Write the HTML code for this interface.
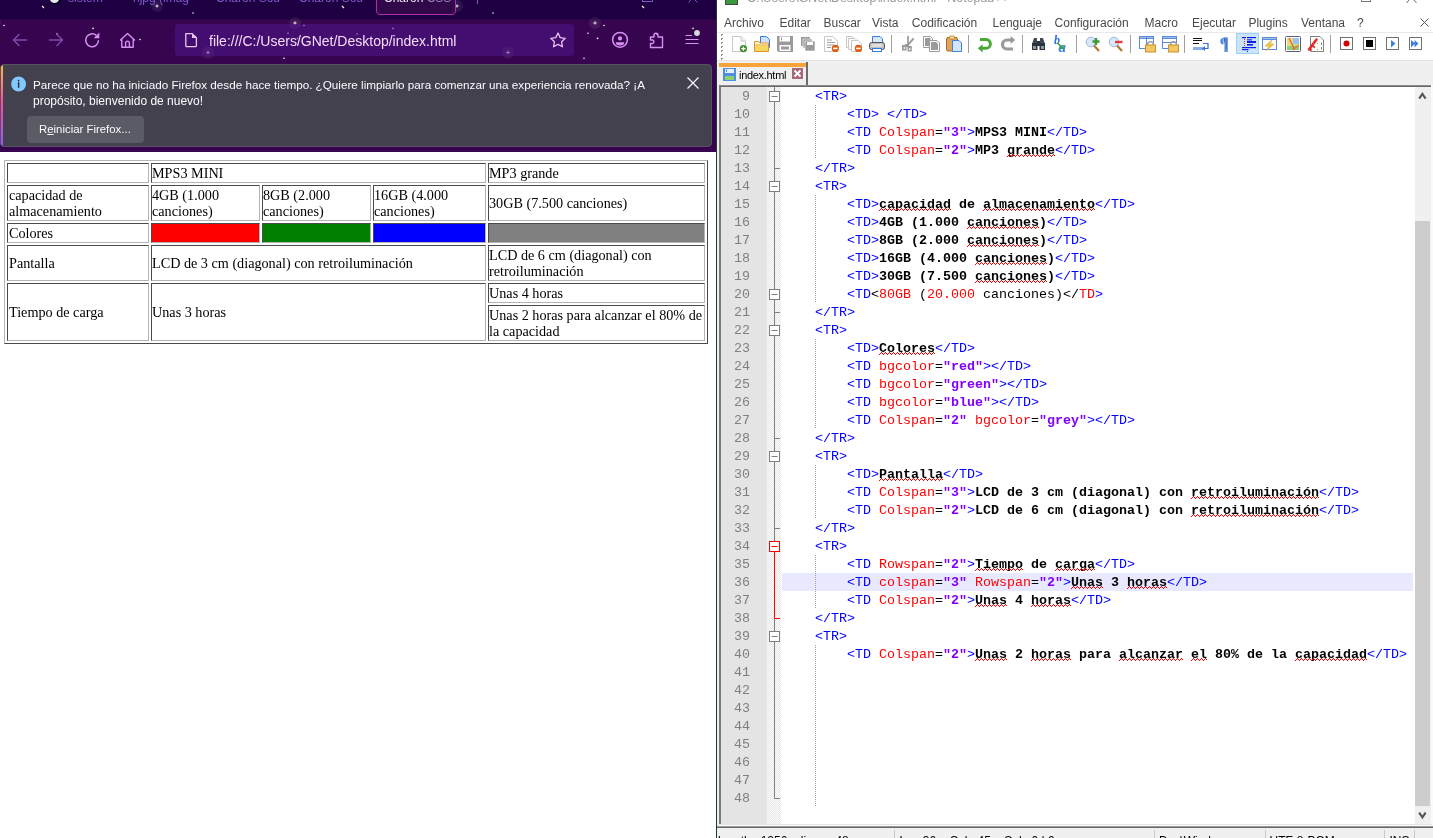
<!DOCTYPE html><html><head><meta charset="utf-8"><style>
*{margin:0;padding:0;box-sizing:border-box}
html,body{width:1433px;height:838px;overflow:hidden;background:#fff;position:relative}
body{font-family:"Liberation Sans",sans-serif}
#root{position:absolute;left:0;top:0;width:1433px;height:838px;overflow:hidden;will-change:transform}
.a{position:absolute}
.ff{font-family:"Liberation Sans",sans-serif}
.tc{position:absolute;border-style:solid;border-width:1px;border-color:#4a4a4a #b3b3b3 #b3b3b3 #4a4a4a;font-family:"Liberation Serif",serif;font-size:14.2px;line-height:16px;color:#000;padding:1px;display:flex;align-items:center;white-space:nowrap}
.ln{position:absolute;left:0;width:1433px;height:18px;font-family:"Liberation Mono",monospace;font-size:13.333px;line-height:18px;white-space:pre}
.num{position:absolute;left:721px;width:29px;text-align:right;color:#808080}
.code{position:absolute;left:783px;color:#000}
.t{color:#0000ff}
.at{color:#ff0000}
.v{color:#8000ff;font-weight:bold}
.b{font-weight:bold}
.r{color:#ff0000}
.sq{}
.mi{position:absolute;top:16px;font-size:12px;line-height:14px;color:#4a4a4a}
</style></head><body><div id="root"><div class="a" style="left:0;top:0;width:716px;height:19px;background:#1e0042"></div><div class="a" style="left:0;top:19px;width:716px;height:133px;background:#37054f;border-top:1px solid #2a053f"></div><svg class="a" style="left:0;top:0" width="716" height="64"><path d="M42 6 L44 8" stroke="#fff8e8" stroke-width="1.1"/><circle cx="157" cy="6" r="6" fill="#ffffff" fill-opacity="0.07"/><path d="M157 3.4 L157.5 5.5 L159.6 6 L157.5 6.5 L157 8.6 L156.5 6.5 L154.4 6 L156.5 5.5 Z" fill="#fffbe8"/><circle cx="193" cy="13" r="0.8" fill="#fff8e8"/><circle cx="-5" cy="23" r="6" fill="#ffffff" fill-opacity="0.07"/><path d="M-5 20.4 L-4.5 22.5 L-2.4 23 L-4.5 23.5 L-5 25.6 L-5.5 23.5 L-7.6 23 L-5.5 22.5 Z" fill="#fffbe8"/><circle cx="4" cy="25.5" r="0.8" fill="#fff8e8"/><circle cx="93" cy="28.4" r="0.8" fill="#fff8e8"/><circle cx="57" cy="34" r="0.8" fill="#fff8e8"/><circle cx="140" cy="39.5" r="0.8" fill="#fff8e8"/><circle cx="208" cy="52.4" r="6" fill="#ffffff" fill-opacity="0.07"/><path d="M208 49.8 L208.5 51.9 L210.6 52.4 L208.5 52.9 L208 55.0 L207.5 52.9 L205.4 52.4 L207.5 51.9 Z" fill="#fffbe8"/><circle cx="284" cy="58.3" r="0.8" fill="#fff8e8"/><circle cx="288" cy="33.2" r="0.8" fill="#fff8e8"/><circle cx="297.5" cy="38.4" r="0.8" fill="#fff8e8"/><path d="M342 6 L344 8" stroke="#fff8e8" stroke-width="1.1"/><circle cx="457" cy="6" r="6" fill="#ffffff" fill-opacity="0.07"/><path d="M457 3.4 L457.5 5.5 L459.6 6 L457.5 6.5 L457 8.6 L456.5 6.5 L454.4 6 L456.5 5.5 Z" fill="#fffbe8"/><circle cx="493" cy="13" r="0.8" fill="#fff8e8"/><circle cx="295" cy="23" r="6" fill="#ffffff" fill-opacity="0.07"/><path d="M295 20.4 L295.5 22.5 L297.6 23 L295.5 23.5 L295 25.6 L294.5 23.5 L292.4 23 L294.5 22.5 Z" fill="#fffbe8"/><circle cx="304" cy="25.5" r="0.8" fill="#fff8e8"/><circle cx="393" cy="28.4" r="0.8" fill="#fff8e8"/><circle cx="357" cy="34" r="0.8" fill="#fff8e8"/><circle cx="440" cy="39.5" r="0.8" fill="#fff8e8"/><circle cx="508" cy="52.4" r="6" fill="#ffffff" fill-opacity="0.07"/><path d="M508 49.8 L508.5 51.9 L510.6 52.4 L508.5 52.9 L508 55.0 L507.5 52.9 L505.4 52.4 L507.5 51.9 Z" fill="#fffbe8"/><circle cx="584" cy="58.3" r="0.8" fill="#fff8e8"/><circle cx="588" cy="33.2" r="0.8" fill="#fff8e8"/><circle cx="597.5" cy="38.4" r="0.8" fill="#fff8e8"/><path d="M642 6 L644 8" stroke="#fff8e8" stroke-width="1.1"/><circle cx="595" cy="23" r="6" fill="#ffffff" fill-opacity="0.07"/><path d="M595 20.4 L595.5 22.5 L597.6 23 L595.5 23.5 L595 25.6 L594.5 23.5 L592.4 23 L594.5 22.5 Z" fill="#fffbe8"/><circle cx="604" cy="25.5" r="0.8" fill="#fff8e8"/><circle cx="693" cy="28.4" r="0.8" fill="#fff8e8"/><circle cx="657" cy="34" r="0.8" fill="#fff8e8"/></svg><div class="a ff" style="left:68px;top:-9px;font-size:12px;line-height:14px;color:#7b5cc8">sistem</div><div class="a ff" style="left:133px;top:-9px;font-size:12px;line-height:14px;color:#7b5cc8">hjpg (imag</div><div class="a ff" style="left:216px;top:-9px;font-size:12px;line-height:14px;color:#7b5cc8">Charon Sou</div><div class="a ff" style="left:299px;top:-9px;font-size:12px;line-height:14px;color:#7b5cc8">Charon Sou</div><div class="a" style="left:376px;top:-6px;width:80px;height:21px;border:1px solid #b02ea8;border-radius:4px;background:#31094b"></div><div class="a ff" style="left:384px;top:-9px;font-size:12px;line-height:14px;color:#e8e0f0">Charon <span style="color:#9a80b8">CSS</span></div><div class="a" style="left:477px;top:0px;width:1px;height:4px;background:#7b5cc8"></div><div class="a" style="left:642px;top:-8px;width:11px;height:10px;border:1px solid #7a5cc0"></div><svg class="a" style="left:680px;top:0" width="24" height="6"><path d="M8.5 2.5 L11.5 -0.5 M17.5 2.5 L14.5 -0.5" stroke="#7a5cc0" stroke-width="1"/></svg><div class="a" style="left:50px;top:-5px;width:9px;height:8px;border-radius:50%;background:#e8e8f0;box-shadow:1px 1px 1px #000"></div><div class="a" style="left:175px;top:24px;width:399px;height:32px;border-radius:4px;background:rgba(81,23,145,0.5)"></div><div class="a ff" style="left:209px;top:33px;font-size:14px;line-height:16px;color:#f4dcf6">file:///C:/Users/GNet/Desktop/index.html</div><svg class="a" style="left:0;top:19px" width="716" height="45" viewBox="0 19 716 45">
<g fill="none" stroke-linecap="round" stroke-linejoin="round">
<path d="M13.5 40 H26.5 M13.5 40 L19 34.5 M13.5 40 L19 45.5" stroke="#8448b0" stroke-width="1.4"/>
<path d="M49.5 40 H62.5 M62.5 40 L57 34.5 M62.5 40 L57 45.5" stroke="#8448b0" stroke-width="1.4"/>
<path d="M98.5 40.3 A6.4 6.4 0 1 1 96.3 35.4" stroke="#d890f5" stroke-width="1.5" stroke-linecap="butt"/>
<path d="M99.3 32.6 V38.2 H93.7 Z" fill="#d890f5" stroke="none"/>
<path d="M120.5 40 L127.5 33.5 L134.5 40 M121.8 39 V47.3 H133.2 V39 M125.6 47.3 V43 A1.9 1.9 0 0 1 129.4 43 V47.3" stroke="#d890f5" stroke-width="1.4"/>
<path d="M185.8 33.6 H192.2 L196.4 37.8 V45.8 A0.9 0.9 0 0 1 195.5 46.7 H186.7 A0.9 0.9 0 0 1 185.8 45.8 Z" stroke="#e8c8f0" stroke-width="1.3"/><path d="M192 33.4 V38 H196.6 Z" fill="#e8c8f0" stroke="none"/>
<path d="M558 33 L560.2 37.6 L565.3 38.3 L561.6 41.8 L562.5 46.8 L558 44.4 L553.5 46.8 L554.4 41.8 L550.7 38.3 L555.8 37.6 Z" stroke="#e8c0f0" stroke-width="1.3"/>
<circle cx="620" cy="39.8" r="7.4" stroke="#d890f5" stroke-width="1.5"/>
<circle cx="620" cy="38.4" r="2.1" fill="#d890f5" stroke="none"/>
<path d="M615.8 42.2 H624.2 Q624.2 45.4 620 45.4 Q615.8 45.4 615.8 42.2 Z" fill="#d890f5" stroke="none"/>
<path d="M650.5 37 H654 V35.3 A2 2 0 0 1 658 35.3 V37 H662.5 V47.5 H650.5 V43.5 H652.5 A1.8 1.8 0 0 0 652.5 40 H650.5 Z" stroke="#d890f5" stroke-width="1.4"/>
<path d="M686 35.5 H691.5 M686 39.5 H698 M686 43.5 H698" stroke="#d890f5" stroke-width="1.2"/>
</g>
<circle cx="697" cy="33" r="2.9" fill="#d8d8d8"/>
</svg><div class="a" style="left:0px;top:64px;width:712px;height:83px;border-radius:4px;background:#42414d;border:1px solid #55545e;overflow:hidden"><div class="a" style="left:0;top:0;width:2px;height:83px;background:linear-gradient(#ffb84a,#ff4aa2 45%,#9059ff)"></div></div><svg class="a" style="left:10px;top:75px" width="18" height="18"><circle cx="8.6" cy="9" r="7.5" fill="#80c8ff"/><circle cx="8.6" cy="5.6" r="0.9" fill="#2b2a33"/><rect x="7.9" y="7.2" width="1.4" height="5.6" fill="#2b2a33"/></svg><div class="a ff" style="left:33px;top:77px;font-size:11.7px;line-height:16px;color:#fbfbfe;white-space:nowrap">Parece que no ha iniciado Firefox desde hace tiempo. ¿Quiere limpiarlo para comenzar una experiencia renovada? ¡A</div><div class="a ff" style="left:33px;top:93px;font-size:12px;line-height:16px;color:#fbfbfe;white-space:nowrap">propósito, bienvenido de nuevo!</div><div class="a" style="left:27px;top:116px;width:117px;height:27px;border-radius:4px;background:#5b5b66"></div><div class="a ff" style="left:39px;top:122px;font-size:11.4px;line-height:14px;color:#fbfbfe;white-space:nowrap">R<u>e</u>iniciar Firefox...</div><svg class="a" style="left:685px;top:76px" width="16" height="16"><path d="M2.5 1.5 L13.5 12.5 M13.5 1.5 L2.5 12.5" stroke="#fbfbfe" stroke-width="1.2"/></svg><div class="a" style="left:0;top:152px;width:716px;height:686px;background:#fff"></div><div class="a" style="left:4px;top:160px;width:704px;height:184px;border-style:solid;border-width:1px;border-color:#b3b3b3 #4a4a4a #4a4a4a #b3b3b3"></div><div class="tc" style="left:7px;top:163px;width:142px;height:20px"><div style="position:relative;left:0px;top:0px"></div></div><div class="tc" style="left:151px;top:163px;width:335px;height:20px"><div style="position:relative;left:-1px;top:0px">MPS3 MINI</div></div><div class="tc" style="left:488px;top:163px;width:217px;height:20px"><div style="position:relative;left:-1px;top:0px">MP3 grande</div></div><div class="tc" style="left:7px;top:185px;width:142px;height:36px"><div style="position:relative;left:0px;top:0px">capacidad de<br>almacenamiento</div></div><div class="tc" style="left:151px;top:185px;width:109px;height:36px"><div style="position:relative;left:-1px;top:0px">4GB (1.000<br>canciones)</div></div><div class="tc" style="left:262px;top:185px;width:109px;height:36px"><div style="position:relative;left:-1px;top:0px">8GB (2.000<br>canciones)</div></div><div class="tc" style="left:373px;top:185px;width:113px;height:36px"><div style="position:relative;left:-1px;top:0px">16GB (4.000<br>canciones)</div></div><div class="tc" style="left:488px;top:185px;width:217px;height:36px"><div style="position:relative;left:-1px;top:0px">30GB (7.500 canciones)</div></div><div class="tc" style="left:7px;top:223px;width:142px;height:20px"><div style="position:relative;left:0px;top:0px">Colores</div></div><div class="tc" style="left:151px;top:223px;width:109px;height:20px;background:#ff0000"><div style="position:relative;left:-1px;top:0px"></div></div><div class="tc" style="left:262px;top:223px;width:109px;height:20px;background:#008000"><div style="position:relative;left:-1px;top:0px"></div></div><div class="tc" style="left:373px;top:223px;width:113px;height:20px;background:#0000ff"><div style="position:relative;left:-1px;top:0px"></div></div><div class="tc" style="left:488px;top:223px;width:217px;height:20px;background:#808080"><div style="position:relative;left:-1px;top:0px"></div></div><div class="tc" style="left:7px;top:245px;width:142px;height:36px"><div style="position:relative;left:0px;top:0px">Pantalla</div></div><div class="tc" style="left:151px;top:245px;width:335px;height:36px"><div style="position:relative;left:-1px;top:0px">LCD de 3 cm (diagonal) con retroiluminación</div></div><div class="tc" style="left:488px;top:245px;width:217px;height:36px"><div style="position:relative;left:-1px;top:0px">LCD de 6 cm (diagonal) con<br>retroiluminación</div></div><div class="tc" style="left:7px;top:283px;width:142px;height:58px"><div style="position:relative;left:0px;top:0px">Tiempo de carga</div></div><div class="tc" style="left:151px;top:283px;width:335px;height:58px"><div style="position:relative;left:-1px;top:0px">Unas 3 horas</div></div><div class="tc" style="left:488px;top:283px;width:217px;height:20px"><div style="position:relative;left:-1px;top:0px">Unas 4 horas</div></div><div class="tc" style="left:488px;top:305px;width:217px;height:36px"><div style="position:relative;left:-1px;top:0px">Unas 2 horas para alcanzar el 80% de<br>la capacidad</div></div><div class="a" style="left:716px;top:0;width:1px;height:838px;background:#203636"></div><div class="a" style="left:717px;top:0;width:716px;height:838px;background:#f0f0f0"></div><div class="a" style="left:717px;top:0;width:716px;height:32px;background:#fff"></div><div class="a" style="left:717px;top:32px;width:716px;height:1px;background:#eaeaea"></div><div class="a" style="left:717px;top:33px;width:716px;height:27px;background:#fff"></div><div class="a" style="left:717px;top:60px;width:716px;height:1px;background:#e3e3e3"></div><div class="a" style="left:725px;top:-8px;width:13px;height:13px;border:1px solid #444;background:#3a9a3a"></div><div class="a ff" style="left:747px;top:-9px;font-size:12.4px;line-height:14px;color:#9a9a9a">C:\Users\GNet\Desktop\index.html - Notepad++</div><div class="a" style="left:1361px;top:-7px;width:10px;height:9px;border:1px solid #777"></div><svg class="a" style="left:1405px;top:0px" width="13" height="4"><path d="M5 -1 L1.5 3 M8 -1 L11.5 3" stroke="#666" stroke-width="1"/></svg><div class="mi" style="left:724px">Archivo</div><div class="mi" style="left:779.5px">Editar</div><div class="mi" style="left:823.5px">Buscar</div><div class="mi" style="left:872px">Vista</div><div class="mi" style="left:911.8px">Codificación</div><div class="mi" style="left:992.6px">Lenguaje</div><div class="mi" style="left:1054.6px">Configuración</div><div class="mi" style="left:1144.5px">Macro</div><div class="mi" style="left:1192px">Ejecutar</div><div class="mi" style="left:1248.4px">Plugins</div><div class="mi" style="left:1301px">Ventana</div><div class="mi" style="left:1357px">?</div><svg class="a" style="left:1420px;top:18px" width="9" height="9"><path d="M0.5 0.5 L8.5 8.5 M8.5 0.5 L0.5 8.5" stroke="#555" stroke-width="1"/></svg><div class="a" style="left:721px;top:34px;width:2px;height:2px;background:linear-gradient(135deg,transparent 25%,#909090 25% 75%,transparent 75%)"></div><div class="a" style="left:721px;top:38px;width:2px;height:2px;background:linear-gradient(135deg,transparent 25%,#909090 25% 75%,transparent 75%)"></div><div class="a" style="left:721px;top:42px;width:2px;height:2px;background:linear-gradient(135deg,transparent 25%,#909090 25% 75%,transparent 75%)"></div><div class="a" style="left:721px;top:46px;width:2px;height:2px;background:linear-gradient(135deg,transparent 25%,#909090 25% 75%,transparent 75%)"></div><div class="a" style="left:721px;top:50px;width:2px;height:2px;background:linear-gradient(135deg,transparent 25%,#909090 25% 75%,transparent 75%)"></div><div class="a" style="left:721px;top:54px;width:2px;height:2px;background:linear-gradient(135deg,transparent 25%,#909090 25% 75%,transparent 75%)"></div><div class="a" style="left:721px;top:58px;width:2px;height:2px;background:linear-gradient(135deg,transparent 25%,#909090 25% 75%,transparent 75%)"></div><svg class="a" style="left:0;top:0" width="1433" height="60">
<!-- new -->
<path d="M732.5 36.5 H741 L745.5 41 V51.5 H732.5 Z" fill="#fff" stroke="#c8c8c8"/>
<path d="M741 36.5 V41 H745.5" fill="#f0f0f0" stroke="#c8c8c8"/>
<circle cx="743.4" cy="48.6" r="3.6" fill="#3a8a2a"/>
<path d="M743.4 46.4 V50.8 M741.2 48.6 H745.6" stroke="#fff" stroke-width="1.4"/>
<!-- open -->
<path d="M760.5 36.5 H766.5 L769.5 39.5 V47.5 H760.5 Z" fill="#cfe0fa" stroke="#3b7ad8"/>
<path d="M754.5 41.5 H759 L760 43 H768.5 V51.5 H754.5 Z" fill="#fff6dc" stroke="#e39325"/>
<rect x="755" y="45.5" width="13" height="5.5" fill="#f6d860"/>
<path d="M755 45 H768" stroke="#e8a838"/>
<!-- save -->
<path d="M777 36 H793 V52 H778.5 L777 50.5 Z" fill="#9a9a9a"/>
<rect x="779.5" y="36.5" width="10.5" height="5" fill="#fff"/>
<rect x="781" y="37.5" width="1" height="3" fill="#9a9a9a"/>
<rect x="779.5" y="45" width="11" height="6" fill="#fff"/>
<rect x="781" y="46.5" width="8" height="3" fill="#9a9a9a"/>
<!-- save all -->
<rect x="801" y="37" width="9" height="9" fill="#9a9a9a"/>
<rect x="803" y="39" width="9" height="9" fill="#9a9a9a" stroke="#fff" stroke-width="0.6"/>
<rect x="805" y="41" width="10" height="10" fill="#9a9a9a" stroke="#fff" stroke-width="0.6"/>
<rect x="807" y="42" width="6" height="3" fill="#fff"/>
<!-- close -->
<path d="M824.5 36.5 H833 L837.5 41 V51.5 H824.5 Z" fill="#fff" stroke="#c8c8c8"/>
<path d="M827 40 H832 M827 42.5 H835 M827 45 H834 M827 47.5 H831" stroke="#888" stroke-width="0.8"/>
<circle cx="835.4" cy="48.4" r="3.6" fill="#e05a10"/>
<rect x="833.2" y="47.6" width="4.4" height="1.6" fill="#fff"/>
<!-- close all -->
<path d="M846.5 36.5 H852 L854 38.5 V47.5 H846.5 Z" fill="#fff" stroke="#c8c8c8"/>
<path d="M848.5 38.5 H855 L857 40.5 V49.5 H848.5 Z" fill="#fff" stroke="#c8c8c8"/>
<path d="M851.5 40.5 H858 L861.5 44 V51.5 H851.5 Z" fill="#fff" stroke="#c8c8c8"/>
<circle cx="858.4" cy="48.4" r="3.6" fill="#e05a10"/>
<rect x="856.2" y="47.6" width="4.4" height="1.6" fill="#fff"/>
<!-- print -->
<path d="M872.5 36.5 H880 L882.5 39 V44 H872.5 Z" fill="#d8e8fc" stroke="#3b7ad8"/>
<rect x="869.5" y="42.5" width="15" height="7" rx="2" fill="#bdbdbd" stroke="#555"/>
<rect x="871.5" y="44" width="11" height="3" fill="#dedede"/>
<rect x="872.5" y="48.5" width="9" height="3" fill="#fff" stroke="#3b7ad8"/>
<!-- sep -->
<rect x="891" y="35" width="1" height="18" fill="#a0a0a0"/>
<rect x="968" y="35" width="1" height="18" fill="#a0a0a0"/>
<rect x="1022" y="35" width="1" height="18" fill="#a0a0a0"/>
<rect x="1076" y="35" width="1" height="18" fill="#a0a0a0"/>
<rect x="1130" y="35" width="1" height="18" fill="#a0a0a0"/>
<rect x="1184" y="35" width="1" height="18" fill="#a0a0a0"/>
<rect x="1330" y="35" width="1" height="18" fill="#a0a0a0"/>
<!-- cut -->
<path d="M908 36 V45.5" stroke="#9a9a9a" stroke-width="1.7"/>
<path d="M913.6 38.4 L907.2 45.8" stroke="#9a9a9a" stroke-width="1.9"/>
<path d="M902 45 H906.5 V50.5 H902 Z M907.5 46 H911.8 V51.5 H907.5 Z M905 44 H909 V47 H905 Z" fill="#9a9a9a"/>
<rect x="903.6" y="47.2" width="1.6" height="1.6" fill="#fff"/>
<rect x="909" y="48.3" width="1.4" height="1.8" fill="#fff"/>
<!-- copy -->
<path d="M923.5 36.5 H930.5 L932.5 38.5 V47.5 H923.5 Z" fill="#fff" stroke="#9a9a9a"/>
<rect x="925" y="38" width="5.5" height="8" fill="#9a9a9a"/>
<path d="M929.5 40.5 H937 L939.5 43 V51.5 H929.5 Z" fill="#fff" stroke="#9a9a9a"/>
<path d="M931 42 H936 L938 44 V50 H931 Z" fill="#9a9a9a"/>
<!-- paste -->
<rect x="946.5" y="37.5" width="11" height="13.5" rx="1.5" fill="#dca560" stroke="#b06a20"/>
<rect x="949.5" y="36" width="5" height="3" rx="0.8" fill="#f8dc90" stroke="#b88030" stroke-width="0.8"/>
<path d="M952.5 40.5 H959 L961.5 43 V51.5 H952.5 Z" fill="#d4e4fc" stroke="#4080e0"/>
<!-- undo -->
<path d="M980 39.5 H986 A4.4 4.4 0 0 1 986 48.3 H982" fill="none" stroke="#48a838" stroke-width="3"/>
<path d="M977.8 48.3 L982.6 44.2 V52.4 Z" fill="#48a838"/>
<!-- redo -->
<path d="M1013 40 H1007 A4.5 4.5 0 0 0 1007 49 H1013" fill="none" stroke="#9a9a9a" stroke-width="3.2"/>
<path d="M1015.2 40 L1010.6 36 V44 Z" fill="#9a9a9a"/>
<!-- find -->
<path d="M1032 44 L1034 38 H1037 V44 Z M1045 44 L1043 38 H1040 V44 Z" fill="#404a56"/>
<rect x="1032" y="43" width="5.5" height="7" fill="#2a323c"/>
<rect x="1039.5" y="43" width="5.5" height="7" fill="#2a323c"/>
<rect x="1037" y="41" width="3" height="5" fill="#2a323c"/>
<rect x="1033" y="46" width="3" height="3" fill="#8a9aaa"/>
<rect x="1041" y="46" width="3" height="3" fill="#8a9aaa"/>
<!-- replace -->
<text x="1054" y="44" font-family="Liberation Serif" font-style="italic" font-weight="bold" font-size="12" fill="#2a70e0">b</text>
<text x="1058.5" y="51.5" font-family="Liberation Serif" font-style="italic" font-weight="bold" font-size="15" fill="#3a80e8">a</text>
<path d="M1057.5 43 L1062 47.5" stroke="#38a038" stroke-width="1.6"/>
<path d="M1063.5 49 L1063.5 45 L1059.5 49 Z" fill="#38a038"/>
<!-- zoom in -->
<circle cx="1091" cy="42" r="4.8" fill="#d8e8fc" stroke="#9ab8e0"/>
<path d="M1094 45.5 L1099 51" stroke="#b07830" stroke-width="2.2"/>
<path d="M1096 38 V45 M1092.5 41.5 H1099.5" stroke="#3a9a30" stroke-width="2.4"/>
<!-- zoom out -->
<circle cx="1114" cy="42" r="4.8" fill="#d8e8fc" stroke="#9ab8e0"/>
<path d="M1117 45.5 L1122 51" stroke="#b07830" stroke-width="2.2"/>
<path d="M1115 42 H1122.5" stroke="#e83838" stroke-width="2.4"/>
<!-- sync v -->
<rect x="1139.5" y="36.5" width="14" height="12" fill="#fff" stroke="#5a8ad8"/>
<rect x="1139.5" y="36.5" width="14" height="2" fill="#a0c0f0" stroke="#5a8ad8"/>
<path d="M1146.5 37 V48" stroke="#5a8ad8"/>
<path d="M1147.5 45 A3 3.2 0 0 1 1153.5 45" fill="none" stroke="#a0a0a0" stroke-width="1.6"/>
<rect x="1145.5" y="45" width="10" height="7" fill="#f4c860" stroke="#c89030"/>
<!-- sync h -->
<rect x="1162.5" y="36.5" width="14" height="12" fill="#fff" stroke="#5a8ad8"/>
<rect x="1162.5" y="36.5" width="14" height="2" fill="#a0c0f0" stroke="#5a8ad8"/>
<path d="M1163 42.5 H1176" stroke="#5a8ad8"/>
<path d="M1170.5 45 A3 3.2 0 0 1 1176.5 45" fill="none" stroke="#a0a0a0" stroke-width="1.6"/>
<rect x="1168.5" y="45" width="10" height="7" fill="#f4c860" stroke="#c89030"/>
<!-- word wrap -->
<path d="M1193 38.5 H1202 M1193 40.5 H1202 M1193 43.5 H1199" stroke="#111" stroke-width="1"/>
<rect x="1193" y="47" width="10" height="3" fill="#8ab0e8"/>
<path d="M1203 43.5 H1208 V48.5 H1203" fill="none" stroke="#3a6ad0" stroke-width="1.2"/>
<path d="M1202 48.5 L1205 46 V51 Z" fill="#3a6ad0"/>
<!-- pilcrow -->
<path d="M1223.5 38 H1227 V52 M1225.2 38 V52" stroke="#5a90e0" stroke-width="1.6"/>
<path d="M1223.5 38 A3 3 0 0 0 1223.5 44.5 Z" fill="#5a90e0"/>
<!-- indent guide highlighted -->
<rect x="1236.5" y="33.5" width="22" height="20" fill="#cce4f7" stroke="#99d1ff"/>
<g fill="#0a1ee8">
<rect x="1242" y="37" width="4" height="1.2"/><rect x="1247" y="37" width="9" height="1.2"/>
<rect x="1247" y="39.3" width="5" height="1.1"/>
<rect x="1247" y="41" width="9" height="2"/>
<rect x="1247" y="44" width="6" height="1.6"/>
<rect x="1242" y="47" width="14" height="1.2"/>
<rect x="1242" y="49" width="6.5" height="1.2"/>
<rect x="1247" y="51" width="1" height="1"/>
</g>
<g fill="#e02020"><rect x="1244" y="39" width="1" height="1"/><rect x="1244" y="41" width="1" height="1"/><rect x="1244" y="43" width="1" height="1"/><rect x="1244" y="45" width="1" height="1"/></g>
<!-- udl -->
<rect x="1262.5" y="37.5" width="14" height="12" fill="#fafafa" stroke="#5a8ad8"/>
<rect x="1262.5" y="37.5" width="14" height="2" fill="#a0c0f0" stroke="#5a8ad8"/>
<path d="M1272 40 L1265 46 H1269 L1266 51 L1274 44 H1270 Z" fill="#f0c840" stroke="#c8a030" stroke-width="0.5"/>
<!-- doc map -->
<rect x="1285.5" y="36.5" width="15" height="15" rx="1" fill="#fff" stroke="#5a5a80"/>
<rect x="1287" y="38" width="6" height="8" fill="#e6dc70"/>
<rect x="1293" y="38" width="6" height="6" fill="#98c0f0"/>
<rect x="1293" y="44" width="6" height="2" fill="#c8e070"/>
<rect x="1287" y="46" width="12" height="4" fill="#88d070"/>
<path d="M1289 38 L1294.5 49.5" stroke="#f05050" stroke-width="1.2"/>
<path d="M1299 45 L1292.5 50" stroke="#f07030" stroke-width="1.2"/>
<!-- function list -->
<path d="M1310.5 36.5 H1320 L1323.5 40 V51.5 H1310.5 Z" fill="#fffdf8" stroke="#808080"/>
<path d="M1309 49.5 L1316.5 39.5" stroke="#e82828" stroke-width="2.6" stroke-linecap="round"/>
<path d="M1309.5 48 L1311.5 50.5" stroke="#e82828" stroke-width="2"/>
<path d="M1312 45.5 L1315 47.5" stroke="#e82828" stroke-width="1.6"/>
<rect x="1317" y="43" width="1" height="1" fill="#70c070"/><rect x="1317" y="49" width="1" height="1" fill="#70c070"/>
<path d="M1321.5 42.5 V45 M1321.5 47 V49.5" stroke="#888" stroke-width="1"/>
<!-- macro -->
<rect x="1340.5" y="37.5" width="12" height="12" fill="#fff" stroke="#707070"/>
<circle cx="1346.5" cy="43.5" r="3" fill="#d00000"/>
<rect x="1363.5" y="37.5" width="12" height="12" fill="#fff" stroke="#707070"/>
<rect x="1366" y="40" width="7" height="7" fill="#000"/>
<rect x="1386.5" y="37.5" width="12" height="12" fill="#fff" stroke="#707070"/>
<path d="M1391 40 L1395.5 43.5 L1391 47.5 Z" fill="#3a80e0"/>
<rect x="1409.5" y="37.5" width="12" height="12" fill="#fff" stroke="#707070"/>
<path d="M1411 40 L1415 43.5 L1411 47.5 Z M1414.5 40 L1418.5 43.5 L1414.5 47.5 Z" fill="#3a80e0"/>
</svg><div class="a" style="left:719px;top:63px;width:87px;height:4px;background:#f8a33a"></div><div class="a" style="left:719px;top:67px;width:87px;height:18px;background:#f0f0f0"></div><div class="a" style="left:806px;top:62px;width:2px;height:23px;background:#6c6c6c"></div><svg class="a" style="left:0;top:0" width="1433" height="90">
<rect x="723" y="68" width="13" height="13" fill="#4f8ee0"/>
<rect x="725" y="69" width="9" height="4" fill="#e8f0fc"/>
<rect x="725" y="76" width="9" height="4" fill="#8cd070"/>
<rect x="726" y="69.5" width="1" height="2.5" fill="#4f8ee0"/>
<rect x="792" y="68" width="11" height="11" fill="#a86878"/>
<path d="M794.5 70.5 L800.5 76.5 M800.5 70.5 L794.5 76.5" stroke="#fff" stroke-width="1.8"/>
</svg><div class="a ff" style="left:739px;top:68px;font-size:11px;line-height:14px;letter-spacing:-0.3px;color:#000">index.html</div><div class="a" style="left:719px;top:85px;width:713px;height:1px;background:#8c8c8c"></div><div class="a" style="left:719px;top:86px;width:713px;height:1px;background:#696969"></div><div class="a" style="left:719px;top:85px;width:2px;height:740px;background:#7a7a7a"></div><div class="a" style="left:721px;top:87px;width:46px;height:737px;background:#e4e4e4"></div><div class="a" style="left:767px;top:87px;width:14px;height:737px;background:repeating-conic-gradient(#e8e8e8 0 25%,#fbfbfb 0 50%) 0 0/2px 2px"></div><div class="a" style="left:781px;top:87px;width:634px;height:737px;background:#fff"></div><div class="a" style="left:1415px;top:87px;width:16px;height:737px;background:#f0f0f0"></div><div class="a" style="left:1415px;top:221px;width:15px;height:585px;background:#cdcdcd"></div><svg class="a" style="left:1415px;top:87px" width="16" height="737"><path d="M4.2 11.6 L7.4 6.8 L10.6 11.6" fill="none" stroke="#555" stroke-width="2.1"/><path d="M4.2 725.6 L7.4 730.4 L10.6 725.6" fill="none" stroke="#555" stroke-width="2.1"/></svg><div class="a" style="left:1431px;top:85px;width:2px;height:741px;background:#fafafa"></div><div class="a" style="left:719px;top:824px;width:713px;height:1px;background:#e6e6e6"></div><div class="a" style="left:719px;top:825px;width:713px;height:1px;background:#fafafa"></div><div class="a" style="left:717px;top:826px;width:716px;height:1px;background:#9a9a9a"></div><div class="a" style="left:717px;top:827px;width:716px;height:1px;background:#6a6a6a"></div><div class="a" style="left:717px;top:828px;width:716px;height:10px;background:#f0f0f0"></div><div class="a" style="left:894px;top:830px;width:1px;height:8px;background:#c8c8c8"></div><div class="a" style="left:1154px;top:830px;width:1px;height:8px;background:#c8c8c8"></div><div class="a" style="left:1265px;top:830px;width:1px;height:8px;background:#c8c8c8"></div><div class="a" style="left:1384px;top:830px;width:1px;height:8px;background:#c8c8c8"></div><div class="a" style="left:1414px;top:830px;width:1px;height:8px;background:#c8c8c8"></div><div class="a ff" style="left:718px;top:834px;font-size:12px;line-height:14px;color:#000;white-space:pre">length : 1256    lines : 48</div><div class="a ff" style="left:899.5px;top:834px;font-size:12px;line-height:14px;color:#000;white-space:pre">Ln : 36    Col : 45    Sel : 0 | 0</div><div class="a ff" style="left:1159px;top:834px;font-size:12px;line-height:14px;color:#000;white-space:pre">Dos\Windows</div><div class="a ff" style="left:1269.5px;top:834px;font-size:12px;line-height:14px;color:#000;white-space:pre">UTF-8-BOM</div><div class="a ff" style="left:1389.5px;top:834px;font-size:12px;line-height:14px;color:#000;white-space:pre">INS</div><div class="a" style="left:782px;top:573px;width:631px;height:18px;background:#e8e8ff"></div><svg class="a" style="left:0;top:0" width="1433" height="838"><path d="M774.5 87 V541" stroke="#808080"/><path d="M774.5 552 V618.5 H780" fill="none" stroke="#ff0000"/><path d="M774.5 619 V798.5 H780" fill="none" stroke="#808080"/><path d="M774.5 168.5 H780" stroke="#808080"/><path d="M774.5 312.5 H780" stroke="#808080"/><path d="M774.5 438.5 H780" stroke="#808080"/><path d="M774.5 528.5 H780" stroke="#808080"/><rect x="769.5" y="91.5" width="10" height="10" fill="#fff" stroke="#808080"/><path d="M771.5 96.5 H777.5" stroke="#808080"/><rect x="769.5" y="181.5" width="10" height="10" fill="#fff" stroke="#808080"/><path d="M771.5 186.5 H777.5" stroke="#808080"/><rect x="769.5" y="289.5" width="10" height="10" fill="#fff" stroke="#808080"/><path d="M771.5 294.5 H777.5" stroke="#808080"/><rect x="769.5" y="325.5" width="10" height="10" fill="#fff" stroke="#808080"/><path d="M771.5 330.5 H777.5" stroke="#808080"/><rect x="769.5" y="451.5" width="10" height="10" fill="#fff" stroke="#808080"/><path d="M771.5 456.5 H777.5" stroke="#808080"/><rect x="769.5" y="541.5" width="10" height="10" fill="#fff" stroke="#ff0000"/><path d="M771.5 546.5 H777.5" stroke="#ff0000"/><rect x="769.5" y="631.5" width="10" height="10" fill="#fff" stroke="#808080"/><path d="M771.5 636.5 H777.5" stroke="#808080"/></svg><div class="a" style="left:815px;top:105px;width:1px;height:18px;background:repeating-linear-gradient(#a0a0a0 0 1px,transparent 1px 2px)"></div><div class="a" style="left:815px;top:123px;width:1px;height:18px;background:repeating-linear-gradient(#a0a0a0 0 1px,transparent 1px 2px)"></div><div class="a" style="left:815px;top:141px;width:1px;height:18px;background:repeating-linear-gradient(#a0a0a0 0 1px,transparent 1px 2px)"></div><div class="a" style="left:815px;top:195px;width:1px;height:18px;background:repeating-linear-gradient(#a0a0a0 0 1px,transparent 1px 2px)"></div><div class="a" style="left:815px;top:213px;width:1px;height:18px;background:repeating-linear-gradient(#a0a0a0 0 1px,transparent 1px 2px)"></div><div class="a" style="left:815px;top:231px;width:1px;height:18px;background:repeating-linear-gradient(#a0a0a0 0 1px,transparent 1px 2px)"></div><div class="a" style="left:815px;top:249px;width:1px;height:18px;background:repeating-linear-gradient(#a0a0a0 0 1px,transparent 1px 2px)"></div><div class="a" style="left:815px;top:267px;width:1px;height:18px;background:repeating-linear-gradient(#a0a0a0 0 1px,transparent 1px 2px)"></div><div class="a" style="left:815px;top:285px;width:1px;height:18px;background:repeating-linear-gradient(#a0a0a0 0 1px,transparent 1px 2px)"></div><div class="a" style="left:815px;top:339px;width:1px;height:18px;background:repeating-linear-gradient(#a0a0a0 0 1px,transparent 1px 2px)"></div><div class="a" style="left:815px;top:357px;width:1px;height:18px;background:repeating-linear-gradient(#a0a0a0 0 1px,transparent 1px 2px)"></div><div class="a" style="left:815px;top:375px;width:1px;height:18px;background:repeating-linear-gradient(#a0a0a0 0 1px,transparent 1px 2px)"></div><div class="a" style="left:815px;top:393px;width:1px;height:18px;background:repeating-linear-gradient(#a0a0a0 0 1px,transparent 1px 2px)"></div><div class="a" style="left:815px;top:411px;width:1px;height:18px;background:repeating-linear-gradient(#a0a0a0 0 1px,transparent 1px 2px)"></div><div class="a" style="left:815px;top:465px;width:1px;height:18px;background:repeating-linear-gradient(#a0a0a0 0 1px,transparent 1px 2px)"></div><div class="a" style="left:815px;top:483px;width:1px;height:18px;background:repeating-linear-gradient(#a0a0a0 0 1px,transparent 1px 2px)"></div><div class="a" style="left:815px;top:501px;width:1px;height:18px;background:repeating-linear-gradient(#a0a0a0 0 1px,transparent 1px 2px)"></div><div class="a" style="left:815px;top:555px;width:1px;height:18px;background:repeating-linear-gradient(#a0a0a0 0 1px,transparent 1px 2px)"></div><div class="a" style="left:815px;top:573px;width:1px;height:18px;background:repeating-linear-gradient(#a0a0a0 0 1px,transparent 1px 2px)"></div><div class="a" style="left:815px;top:591px;width:1px;height:18px;background:repeating-linear-gradient(#a0a0a0 0 1px,transparent 1px 2px)"></div><div class="a" style="left:815px;top:645px;width:1px;height:18px;background:repeating-linear-gradient(#a0a0a0 0 1px,transparent 1px 2px)"></div><div class="a" style="left:815px;top:663px;width:1px;height:18px;background:repeating-linear-gradient(#a0a0a0 0 1px,transparent 1px 2px)"></div><div class="a" style="left:815px;top:681px;width:1px;height:18px;background:repeating-linear-gradient(#a0a0a0 0 1px,transparent 1px 2px)"></div><div class="a" style="left:815px;top:699px;width:1px;height:18px;background:repeating-linear-gradient(#a0a0a0 0 1px,transparent 1px 2px)"></div><div class="a" style="left:815px;top:717px;width:1px;height:18px;background:repeating-linear-gradient(#a0a0a0 0 1px,transparent 1px 2px)"></div><div class="a" style="left:815px;top:735px;width:1px;height:18px;background:repeating-linear-gradient(#a0a0a0 0 1px,transparent 1px 2px)"></div><div class="a" style="left:815px;top:753px;width:1px;height:18px;background:repeating-linear-gradient(#a0a0a0 0 1px,transparent 1px 2px)"></div><div class="a" style="left:815px;top:771px;width:1px;height:18px;background:repeating-linear-gradient(#a0a0a0 0 1px,transparent 1px 2px)"></div><div class="a" style="left:815px;top:789px;width:1px;height:18px;background:repeating-linear-gradient(#a0a0a0 0 1px,transparent 1px 2px)"></div><div class="ln" style="top:88px"><div class="num">9</div><div class="code">    <span class="t">&lt;TR&gt;</span></div></div><div class="ln" style="top:106px"><div class="num">10</div><div class="code">        <span class="t">&lt;TD&gt;</span> <span class="t">&lt;/TD&gt;</span></div></div><div class="ln" style="top:124px"><div class="num">11</div><div class="code">        <span class="t">&lt;TD</span> <span class="at">Colspan</span>=<span class="v">&quot;3&quot;</span><span class="t">&gt;</span><span class="b">MPS3</span><span class="b"> </span><span class="b">MINI</span><span class="t">&lt;/TD&gt;</span></div></div><div class="ln" style="top:142px"><div class="num">12</div><div class="code">        <span class="t">&lt;TD</span> <span class="at">Colspan</span>=<span class="v">&quot;2&quot;</span><span class="t">&gt;</span><span class="b">MP3</span><span class="b"> </span><span class="b sq">grande</span><span class="t">&lt;/TD&gt;</span></div></div><div class="ln" style="top:160px"><div class="num">13</div><div class="code">    <span class="t">&lt;/TR&gt;</span></div></div><div class="ln" style="top:178px"><div class="num">14</div><div class="code">    <span class="t">&lt;TR&gt;</span></div></div><div class="ln" style="top:196px"><div class="num">15</div><div class="code">        <span class="t">&lt;TD</span><span class="t">&gt;</span><span class="b sq">capacidad</span><span class="b"> </span><span class="b">de</span><span class="b"> </span><span class="b sq">almacenamiento</span><span class="t">&lt;/TD&gt;</span></div></div><div class="ln" style="top:214px"><div class="num">16</div><div class="code">        <span class="t">&lt;TD</span><span class="t">&gt;</span><span class="b">4GB</span><span class="b"> </span><span class="b">(</span><span class="b">1.000</span><span class="b"> </span><span class="b sq">canciones</span><span class="b">)</span><span class="t">&lt;/TD&gt;</span></div></div><div class="ln" style="top:232px"><div class="num">17</div><div class="code">        <span class="t">&lt;TD</span><span class="t">&gt;</span><span class="b">8GB</span><span class="b"> </span><span class="b">(</span><span class="b">2.000</span><span class="b"> </span><span class="b sq">canciones</span><span class="b">)</span><span class="t">&lt;/TD&gt;</span></div></div><div class="ln" style="top:250px"><div class="num">18</div><div class="code">        <span class="t">&lt;TD</span><span class="t">&gt;</span><span class="b">16GB</span><span class="b"> </span><span class="b">(</span><span class="b">4.000</span><span class="b"> </span><span class="b sq">canciones</span><span class="b">)</span><span class="t">&lt;/TD&gt;</span></div></div><div class="ln" style="top:268px"><div class="num">19</div><div class="code">        <span class="t">&lt;TD</span><span class="t">&gt;</span><span class="b">30GB</span><span class="b"> </span><span class="b">(</span><span class="b">7.500</span><span class="b"> </span><span class="b sq">canciones</span><span class="b">)</span><span class="t">&lt;/TD&gt;</span></div></div><div class="ln" style="top:286px"><div class="num">20</div><div class="code">        <span class="t">&lt;TD</span>&lt;<span class="r">80GB</span> (<span class="r">20.000</span> canciones)&lt;/<span class="r">TD</span><span class="t">&gt;</span></div></div><div class="ln" style="top:304px"><div class="num">21</div><div class="code">    <span class="t">&lt;/TR&gt;</span></div></div><div class="ln" style="top:322px"><div class="num">22</div><div class="code">    <span class="t">&lt;TR&gt;</span></div></div><div class="ln" style="top:340px"><div class="num">23</div><div class="code">        <span class="t">&lt;TD</span><span class="t">&gt;</span><span class="b sq">Colores</span><span class="t">&lt;/TD&gt;</span></div></div><div class="ln" style="top:358px"><div class="num">24</div><div class="code">        <span class="t">&lt;TD</span> <span class="at">bgcolor</span>=<span class="v">&quot;red&quot;</span><span class="t">&gt;</span><span class="t">&lt;/TD&gt;</span></div></div><div class="ln" style="top:376px"><div class="num">25</div><div class="code">        <span class="t">&lt;TD</span> <span class="at">bgcolor</span>=<span class="v">&quot;green&quot;</span><span class="t">&gt;</span><span class="t">&lt;/TD&gt;</span></div></div><div class="ln" style="top:394px"><div class="num">26</div><div class="code">        <span class="t">&lt;TD</span> <span class="at">bgcolor</span>=<span class="v">&quot;blue&quot;</span><span class="t">&gt;</span><span class="t">&lt;/TD&gt;</span></div></div><div class="ln" style="top:412px"><div class="num">27</div><div class="code">        <span class="t">&lt;TD</span> <span class="at">Colspan</span>=<span class="v">&quot;2&quot;</span> <span class="at">bgcolor</span>=<span class="v">&quot;grey&quot;</span><span class="t">&gt;</span><span class="t">&lt;/TD&gt;</span></div></div><div class="ln" style="top:430px"><div class="num">28</div><div class="code">    <span class="t">&lt;/TR&gt;</span></div></div><div class="ln" style="top:448px"><div class="num">29</div><div class="code">    <span class="t">&lt;TR&gt;</span></div></div><div class="ln" style="top:466px"><div class="num">30</div><div class="code">        <span class="t">&lt;TD</span><span class="t">&gt;</span><span class="b sq">Pantalla</span><span class="t">&lt;/TD&gt;</span></div></div><div class="ln" style="top:484px"><div class="num">31</div><div class="code">        <span class="t">&lt;TD</span> <span class="at">Colspan</span>=<span class="v">&quot;3&quot;</span><span class="t">&gt;</span><span class="b">LCD</span><span class="b"> </span><span class="b">de</span><span class="b"> </span><span class="b">3</span><span class="b"> </span><span class="b">cm</span><span class="b"> </span><span class="b">(</span><span class="b">diagonal</span><span class="b">)</span><span class="b"> </span><span class="b">con</span><span class="b"> </span><span class="b sq">retroiluminación</span><span class="t">&lt;/TD&gt;</span></div></div><div class="ln" style="top:502px"><div class="num">32</div><div class="code">        <span class="t">&lt;TD</span> <span class="at">Colspan</span>=<span class="v">&quot;2&quot;</span><span class="t">&gt;</span><span class="b">LCD</span><span class="b"> </span><span class="b">de</span><span class="b"> </span><span class="b">6</span><span class="b"> </span><span class="b">cm</span><span class="b"> </span><span class="b">(</span><span class="b">diagonal</span><span class="b">)</span><span class="b"> </span><span class="b">con</span><span class="b"> </span><span class="b sq">retroiluminación</span><span class="t">&lt;/TD&gt;</span></div></div><div class="ln" style="top:520px"><div class="num">33</div><div class="code">    <span class="t">&lt;/TR&gt;</span></div></div><div class="ln" style="top:538px"><div class="num">34</div><div class="code">    <span class="t">&lt;TR&gt;</span></div></div><div class="ln" style="top:556px"><div class="num">35</div><div class="code">        <span class="t">&lt;TD</span> <span class="at">Rowspan</span>=<span class="v">&quot;2&quot;</span><span class="t">&gt;</span><span class="b sq">Tiempo</span><span class="b"> </span><span class="b">de</span><span class="b"> </span><span class="b sq">carga</span><span class="t">&lt;/TD&gt;</span></div></div><div class="ln" style="top:574px"><div class="num">36</div><div class="code">        <span class="t">&lt;TD</span> <span class="at">colspan</span>=<span class="v">&quot;3&quot;</span> <span class="at">Rowspan</span>=<span class="v">&quot;2&quot;</span><span class="t">&gt;</span><span class="b sq">Unas</span><span class="b"> </span><span class="b">3</span><span class="b"> </span><span class="b sq">horas</span><span class="t">&lt;/TD&gt;</span></div></div><div class="ln" style="top:592px"><div class="num">37</div><div class="code">        <span class="t">&lt;TD</span> <span class="at">Colspan</span>=<span class="v">&quot;2&quot;</span><span class="t">&gt;</span><span class="b sq">Unas</span><span class="b"> </span><span class="b">4</span><span class="b"> </span><span class="b sq">horas</span><span class="t">&lt;/TD&gt;</span></div></div><div class="ln" style="top:610px"><div class="num">38</div><div class="code">    <span class="t">&lt;/TR&gt;</span></div></div><div class="ln" style="top:628px"><div class="num">39</div><div class="code">    <span class="t">&lt;TR&gt;</span></div></div><div class="ln" style="top:646px"><div class="num">40</div><div class="code">        <span class="t">&lt;TD</span> <span class="at">Colspan</span>=<span class="v">&quot;2&quot;</span><span class="t">&gt;</span><span class="b sq">Unas</span><span class="b"> </span><span class="b">2</span><span class="b"> </span><span class="b sq">horas</span><span class="b"> </span><span class="b">para</span><span class="b"> </span><span class="b sq">alcanzar</span><span class="b"> </span><span class="b sq">el</span><span class="b"> </span><span class="b">80%</span><span class="b"> </span><span class="b">de</span><span class="b"> </span><span class="b">la</span><span class="b"> </span><span class="b sq">capacidad</span><span class="t">&lt;/TD&gt;</span></div></div><div class="ln" style="top:664px"><div class="num">41</div><div class="code"></div></div><div class="ln" style="top:682px"><div class="num">42</div><div class="code"></div></div><div class="ln" style="top:700px"><div class="num">43</div><div class="code"></div></div><div class="ln" style="top:718px"><div class="num">44</div><div class="code"></div></div><div class="ln" style="top:736px"><div class="num">45</div><div class="code"></div></div><div class="ln" style="top:754px"><div class="num">46</div><div class="code"></div></div><div class="ln" style="top:772px"><div class="num">47</div><div class="code"></div></div><div class="ln" style="top:790px"><div class="num">48</div><div class="code"></div></div><svg class="a" style="left:0;top:0" width="1433" height="838"><path d="M1007 156.5h1M1008 155.5h1M1009 154.5h1M1010 155.5h1M1011 156.5h1M1012 155.5h1M1013 154.5h1M1014 155.5h1M1015 156.5h1M1016 155.5h1M1017 154.5h1M1018 155.5h1M1019 156.5h1M1020 155.5h1M1021 154.5h1M1022 155.5h1M1023 156.5h1M1024 155.5h1M1025 154.5h1M1026 155.5h1M1027 156.5h1M1028 155.5h1M1029 154.5h1M1030 155.5h1M1031 156.5h1M1032 155.5h1M1033 154.5h1M1034 155.5h1M1035 156.5h1M1036 155.5h1M1037 154.5h1M1038 155.5h1M1039 156.5h1M1040 155.5h1M1041 154.5h1M1042 155.5h1M1043 156.5h1M1044 155.5h1M1045 154.5h1M1046 155.5h1M1047 156.5h1M1048 155.5h1M1049 154.5h1M1050 155.5h1M1051 156.5h1M1052 155.5h1M1053 154.5h1M1054 155.5h1" stroke="#ff0000" stroke-width="1" fill="none"/><path d="M879 210.5h1M880 209.5h1M881 208.5h1M882 209.5h1M883 210.5h1M884 209.5h1M885 208.5h1M886 209.5h1M887 210.5h1M888 209.5h1M889 208.5h1M890 209.5h1M891 210.5h1M892 209.5h1M893 208.5h1M894 209.5h1M895 210.5h1M896 209.5h1M897 208.5h1M898 209.5h1M899 210.5h1M900 209.5h1M901 208.5h1M902 209.5h1M903 210.5h1M904 209.5h1M905 208.5h1M906 209.5h1M907 210.5h1M908 209.5h1M909 208.5h1M910 209.5h1M911 210.5h1M912 209.5h1M913 208.5h1M914 209.5h1M915 210.5h1M916 209.5h1M917 208.5h1M918 209.5h1M919 210.5h1M920 209.5h1M921 208.5h1M922 209.5h1M923 210.5h1M924 209.5h1M925 208.5h1M926 209.5h1M927 210.5h1M928 209.5h1M929 208.5h1M930 209.5h1M931 210.5h1M932 209.5h1M933 208.5h1M934 209.5h1M935 210.5h1M936 209.5h1M937 208.5h1M938 209.5h1M939 210.5h1M940 209.5h1M941 208.5h1M942 209.5h1M943 210.5h1M944 209.5h1M945 208.5h1M946 209.5h1M947 210.5h1M948 209.5h1M949 208.5h1M950 209.5h1" stroke="#ff0000" stroke-width="1" fill="none"/><path d="M983 210.5h1M984 209.5h1M985 208.5h1M986 209.5h1M987 210.5h1M988 209.5h1M989 208.5h1M990 209.5h1M991 210.5h1M992 209.5h1M993 208.5h1M994 209.5h1M995 210.5h1M996 209.5h1M997 208.5h1M998 209.5h1M999 210.5h1M1000 209.5h1M1001 208.5h1M1002 209.5h1M1003 210.5h1M1004 209.5h1M1005 208.5h1M1006 209.5h1M1007 210.5h1M1008 209.5h1M1009 208.5h1M1010 209.5h1M1011 210.5h1M1012 209.5h1M1013 208.5h1M1014 209.5h1M1015 210.5h1M1016 209.5h1M1017 208.5h1M1018 209.5h1M1019 210.5h1M1020 209.5h1M1021 208.5h1M1022 209.5h1M1023 210.5h1M1024 209.5h1M1025 208.5h1M1026 209.5h1M1027 210.5h1M1028 209.5h1M1029 208.5h1M1030 209.5h1M1031 210.5h1M1032 209.5h1M1033 208.5h1M1034 209.5h1M1035 210.5h1M1036 209.5h1M1037 208.5h1M1038 209.5h1M1039 210.5h1M1040 209.5h1M1041 208.5h1M1042 209.5h1M1043 210.5h1M1044 209.5h1M1045 208.5h1M1046 209.5h1M1047 210.5h1M1048 209.5h1M1049 208.5h1M1050 209.5h1M1051 210.5h1M1052 209.5h1M1053 208.5h1M1054 209.5h1M1055 210.5h1M1056 209.5h1M1057 208.5h1M1058 209.5h1M1059 210.5h1M1060 209.5h1M1061 208.5h1M1062 209.5h1M1063 210.5h1M1064 209.5h1M1065 208.5h1M1066 209.5h1M1067 210.5h1M1068 209.5h1M1069 208.5h1M1070 209.5h1M1071 210.5h1M1072 209.5h1M1073 208.5h1M1074 209.5h1M1075 210.5h1M1076 209.5h1M1077 208.5h1M1078 209.5h1M1079 210.5h1M1080 209.5h1M1081 208.5h1M1082 209.5h1M1083 210.5h1M1084 209.5h1M1085 208.5h1M1086 209.5h1M1087 210.5h1M1088 209.5h1M1089 208.5h1M1090 209.5h1M1091 210.5h1M1092 209.5h1M1093 208.5h1M1094 209.5h1" stroke="#ff0000" stroke-width="1" fill="none"/><path d="M967 228.5h1M968 227.5h1M969 226.5h1M970 227.5h1M971 228.5h1M972 227.5h1M973 226.5h1M974 227.5h1M975 228.5h1M976 227.5h1M977 226.5h1M978 227.5h1M979 228.5h1M980 227.5h1M981 226.5h1M982 227.5h1M983 228.5h1M984 227.5h1M985 226.5h1M986 227.5h1M987 228.5h1M988 227.5h1M989 226.5h1M990 227.5h1M991 228.5h1M992 227.5h1M993 226.5h1M994 227.5h1M995 228.5h1M996 227.5h1M997 226.5h1M998 227.5h1M999 228.5h1M1000 227.5h1M1001 226.5h1M1002 227.5h1M1003 228.5h1M1004 227.5h1M1005 226.5h1M1006 227.5h1M1007 228.5h1M1008 227.5h1M1009 226.5h1M1010 227.5h1M1011 228.5h1M1012 227.5h1M1013 226.5h1M1014 227.5h1M1015 228.5h1M1016 227.5h1M1017 226.5h1M1018 227.5h1M1019 228.5h1M1020 227.5h1M1021 226.5h1M1022 227.5h1M1023 228.5h1M1024 227.5h1M1025 226.5h1M1026 227.5h1M1027 228.5h1M1028 227.5h1M1029 226.5h1M1030 227.5h1M1031 228.5h1M1032 227.5h1M1033 226.5h1M1034 227.5h1M1035 228.5h1M1036 227.5h1M1037 226.5h1M1038 227.5h1" stroke="#ff0000" stroke-width="1" fill="none"/><path d="M967 246.5h1M968 245.5h1M969 244.5h1M970 245.5h1M971 246.5h1M972 245.5h1M973 244.5h1M974 245.5h1M975 246.5h1M976 245.5h1M977 244.5h1M978 245.5h1M979 246.5h1M980 245.5h1M981 244.5h1M982 245.5h1M983 246.5h1M984 245.5h1M985 244.5h1M986 245.5h1M987 246.5h1M988 245.5h1M989 244.5h1M990 245.5h1M991 246.5h1M992 245.5h1M993 244.5h1M994 245.5h1M995 246.5h1M996 245.5h1M997 244.5h1M998 245.5h1M999 246.5h1M1000 245.5h1M1001 244.5h1M1002 245.5h1M1003 246.5h1M1004 245.5h1M1005 244.5h1M1006 245.5h1M1007 246.5h1M1008 245.5h1M1009 244.5h1M1010 245.5h1M1011 246.5h1M1012 245.5h1M1013 244.5h1M1014 245.5h1M1015 246.5h1M1016 245.5h1M1017 244.5h1M1018 245.5h1M1019 246.5h1M1020 245.5h1M1021 244.5h1M1022 245.5h1M1023 246.5h1M1024 245.5h1M1025 244.5h1M1026 245.5h1M1027 246.5h1M1028 245.5h1M1029 244.5h1M1030 245.5h1M1031 246.5h1M1032 245.5h1M1033 244.5h1M1034 245.5h1M1035 246.5h1M1036 245.5h1M1037 244.5h1M1038 245.5h1" stroke="#ff0000" stroke-width="1" fill="none"/><path d="M975 264.5h1M976 263.5h1M977 262.5h1M978 263.5h1M979 264.5h1M980 263.5h1M981 262.5h1M982 263.5h1M983 264.5h1M984 263.5h1M985 262.5h1M986 263.5h1M987 264.5h1M988 263.5h1M989 262.5h1M990 263.5h1M991 264.5h1M992 263.5h1M993 262.5h1M994 263.5h1M995 264.5h1M996 263.5h1M997 262.5h1M998 263.5h1M999 264.5h1M1000 263.5h1M1001 262.5h1M1002 263.5h1M1003 264.5h1M1004 263.5h1M1005 262.5h1M1006 263.5h1M1007 264.5h1M1008 263.5h1M1009 262.5h1M1010 263.5h1M1011 264.5h1M1012 263.5h1M1013 262.5h1M1014 263.5h1M1015 264.5h1M1016 263.5h1M1017 262.5h1M1018 263.5h1M1019 264.5h1M1020 263.5h1M1021 262.5h1M1022 263.5h1M1023 264.5h1M1024 263.5h1M1025 262.5h1M1026 263.5h1M1027 264.5h1M1028 263.5h1M1029 262.5h1M1030 263.5h1M1031 264.5h1M1032 263.5h1M1033 262.5h1M1034 263.5h1M1035 264.5h1M1036 263.5h1M1037 262.5h1M1038 263.5h1M1039 264.5h1M1040 263.5h1M1041 262.5h1M1042 263.5h1M1043 264.5h1M1044 263.5h1M1045 262.5h1M1046 263.5h1" stroke="#ff0000" stroke-width="1" fill="none"/><path d="M975 282.5h1M976 281.5h1M977 280.5h1M978 281.5h1M979 282.5h1M980 281.5h1M981 280.5h1M982 281.5h1M983 282.5h1M984 281.5h1M985 280.5h1M986 281.5h1M987 282.5h1M988 281.5h1M989 280.5h1M990 281.5h1M991 282.5h1M992 281.5h1M993 280.5h1M994 281.5h1M995 282.5h1M996 281.5h1M997 280.5h1M998 281.5h1M999 282.5h1M1000 281.5h1M1001 280.5h1M1002 281.5h1M1003 282.5h1M1004 281.5h1M1005 280.5h1M1006 281.5h1M1007 282.5h1M1008 281.5h1M1009 280.5h1M1010 281.5h1M1011 282.5h1M1012 281.5h1M1013 280.5h1M1014 281.5h1M1015 282.5h1M1016 281.5h1M1017 280.5h1M1018 281.5h1M1019 282.5h1M1020 281.5h1M1021 280.5h1M1022 281.5h1M1023 282.5h1M1024 281.5h1M1025 280.5h1M1026 281.5h1M1027 282.5h1M1028 281.5h1M1029 280.5h1M1030 281.5h1M1031 282.5h1M1032 281.5h1M1033 280.5h1M1034 281.5h1M1035 282.5h1M1036 281.5h1M1037 280.5h1M1038 281.5h1M1039 282.5h1M1040 281.5h1M1041 280.5h1M1042 281.5h1M1043 282.5h1M1044 281.5h1M1045 280.5h1M1046 281.5h1" stroke="#ff0000" stroke-width="1" fill="none"/><path d="M879 354.5h1M880 353.5h1M881 352.5h1M882 353.5h1M883 354.5h1M884 353.5h1M885 352.5h1M886 353.5h1M887 354.5h1M888 353.5h1M889 352.5h1M890 353.5h1M891 354.5h1M892 353.5h1M893 352.5h1M894 353.5h1M895 354.5h1M896 353.5h1M897 352.5h1M898 353.5h1M899 354.5h1M900 353.5h1M901 352.5h1M902 353.5h1M903 354.5h1M904 353.5h1M905 352.5h1M906 353.5h1M907 354.5h1M908 353.5h1M909 352.5h1M910 353.5h1M911 354.5h1M912 353.5h1M913 352.5h1M914 353.5h1M915 354.5h1M916 353.5h1M917 352.5h1M918 353.5h1M919 354.5h1M920 353.5h1M921 352.5h1M922 353.5h1M923 354.5h1M924 353.5h1M925 352.5h1M926 353.5h1M927 354.5h1M928 353.5h1M929 352.5h1M930 353.5h1M931 354.5h1M932 353.5h1M933 352.5h1M934 353.5h1" stroke="#ff0000" stroke-width="1" fill="none"/><path d="M879 480.5h1M880 479.5h1M881 478.5h1M882 479.5h1M883 480.5h1M884 479.5h1M885 478.5h1M886 479.5h1M887 480.5h1M888 479.5h1M889 478.5h1M890 479.5h1M891 480.5h1M892 479.5h1M893 478.5h1M894 479.5h1M895 480.5h1M896 479.5h1M897 478.5h1M898 479.5h1M899 480.5h1M900 479.5h1M901 478.5h1M902 479.5h1M903 480.5h1M904 479.5h1M905 478.5h1M906 479.5h1M907 480.5h1M908 479.5h1M909 478.5h1M910 479.5h1M911 480.5h1M912 479.5h1M913 478.5h1M914 479.5h1M915 480.5h1M916 479.5h1M917 478.5h1M918 479.5h1M919 480.5h1M920 479.5h1M921 478.5h1M922 479.5h1M923 480.5h1M924 479.5h1M925 478.5h1M926 479.5h1M927 480.5h1M928 479.5h1M929 478.5h1M930 479.5h1M931 480.5h1M932 479.5h1M933 478.5h1M934 479.5h1M935 480.5h1M936 479.5h1M937 478.5h1M938 479.5h1M939 480.5h1M940 479.5h1M941 478.5h1M942 479.5h1" stroke="#ff0000" stroke-width="1" fill="none"/><path d="M1191 498.5h1M1192 497.5h1M1193 496.5h1M1194 497.5h1M1195 498.5h1M1196 497.5h1M1197 496.5h1M1198 497.5h1M1199 498.5h1M1200 497.5h1M1201 496.5h1M1202 497.5h1M1203 498.5h1M1204 497.5h1M1205 496.5h1M1206 497.5h1M1207 498.5h1M1208 497.5h1M1209 496.5h1M1210 497.5h1M1211 498.5h1M1212 497.5h1M1213 496.5h1M1214 497.5h1M1215 498.5h1M1216 497.5h1M1217 496.5h1M1218 497.5h1M1219 498.5h1M1220 497.5h1M1221 496.5h1M1222 497.5h1M1223 498.5h1M1224 497.5h1M1225 496.5h1M1226 497.5h1M1227 498.5h1M1228 497.5h1M1229 496.5h1M1230 497.5h1M1231 498.5h1M1232 497.5h1M1233 496.5h1M1234 497.5h1M1235 498.5h1M1236 497.5h1M1237 496.5h1M1238 497.5h1M1239 498.5h1M1240 497.5h1M1241 496.5h1M1242 497.5h1M1243 498.5h1M1244 497.5h1M1245 496.5h1M1246 497.5h1M1247 498.5h1M1248 497.5h1M1249 496.5h1M1250 497.5h1M1251 498.5h1M1252 497.5h1M1253 496.5h1M1254 497.5h1M1255 498.5h1M1256 497.5h1M1257 496.5h1M1258 497.5h1M1259 498.5h1M1260 497.5h1M1261 496.5h1M1262 497.5h1M1263 498.5h1M1264 497.5h1M1265 496.5h1M1266 497.5h1M1267 498.5h1M1268 497.5h1M1269 496.5h1M1270 497.5h1M1271 498.5h1M1272 497.5h1M1273 496.5h1M1274 497.5h1M1275 498.5h1M1276 497.5h1M1277 496.5h1M1278 497.5h1M1279 498.5h1M1280 497.5h1M1281 496.5h1M1282 497.5h1M1283 498.5h1M1284 497.5h1M1285 496.5h1M1286 497.5h1M1287 498.5h1M1288 497.5h1M1289 496.5h1M1290 497.5h1M1291 498.5h1M1292 497.5h1M1293 496.5h1M1294 497.5h1M1295 498.5h1M1296 497.5h1M1297 496.5h1M1298 497.5h1M1299 498.5h1M1300 497.5h1M1301 496.5h1M1302 497.5h1M1303 498.5h1M1304 497.5h1M1305 496.5h1M1306 497.5h1M1307 498.5h1M1308 497.5h1M1309 496.5h1M1310 497.5h1M1311 498.5h1M1312 497.5h1M1313 496.5h1M1314 497.5h1M1315 498.5h1M1316 497.5h1M1317 496.5h1M1318 497.5h1" stroke="#ff0000" stroke-width="1" fill="none"/><path d="M1191 516.5h1M1192 515.5h1M1193 514.5h1M1194 515.5h1M1195 516.5h1M1196 515.5h1M1197 514.5h1M1198 515.5h1M1199 516.5h1M1200 515.5h1M1201 514.5h1M1202 515.5h1M1203 516.5h1M1204 515.5h1M1205 514.5h1M1206 515.5h1M1207 516.5h1M1208 515.5h1M1209 514.5h1M1210 515.5h1M1211 516.5h1M1212 515.5h1M1213 514.5h1M1214 515.5h1M1215 516.5h1M1216 515.5h1M1217 514.5h1M1218 515.5h1M1219 516.5h1M1220 515.5h1M1221 514.5h1M1222 515.5h1M1223 516.5h1M1224 515.5h1M1225 514.5h1M1226 515.5h1M1227 516.5h1M1228 515.5h1M1229 514.5h1M1230 515.5h1M1231 516.5h1M1232 515.5h1M1233 514.5h1M1234 515.5h1M1235 516.5h1M1236 515.5h1M1237 514.5h1M1238 515.5h1M1239 516.5h1M1240 515.5h1M1241 514.5h1M1242 515.5h1M1243 516.5h1M1244 515.5h1M1245 514.5h1M1246 515.5h1M1247 516.5h1M1248 515.5h1M1249 514.5h1M1250 515.5h1M1251 516.5h1M1252 515.5h1M1253 514.5h1M1254 515.5h1M1255 516.5h1M1256 515.5h1M1257 514.5h1M1258 515.5h1M1259 516.5h1M1260 515.5h1M1261 514.5h1M1262 515.5h1M1263 516.5h1M1264 515.5h1M1265 514.5h1M1266 515.5h1M1267 516.5h1M1268 515.5h1M1269 514.5h1M1270 515.5h1M1271 516.5h1M1272 515.5h1M1273 514.5h1M1274 515.5h1M1275 516.5h1M1276 515.5h1M1277 514.5h1M1278 515.5h1M1279 516.5h1M1280 515.5h1M1281 514.5h1M1282 515.5h1M1283 516.5h1M1284 515.5h1M1285 514.5h1M1286 515.5h1M1287 516.5h1M1288 515.5h1M1289 514.5h1M1290 515.5h1M1291 516.5h1M1292 515.5h1M1293 514.5h1M1294 515.5h1M1295 516.5h1M1296 515.5h1M1297 514.5h1M1298 515.5h1M1299 516.5h1M1300 515.5h1M1301 514.5h1M1302 515.5h1M1303 516.5h1M1304 515.5h1M1305 514.5h1M1306 515.5h1M1307 516.5h1M1308 515.5h1M1309 514.5h1M1310 515.5h1M1311 516.5h1M1312 515.5h1M1313 514.5h1M1314 515.5h1M1315 516.5h1M1316 515.5h1M1317 514.5h1M1318 515.5h1" stroke="#ff0000" stroke-width="1" fill="none"/><path d="M975 570.5h1M976 569.5h1M977 568.5h1M978 569.5h1M979 570.5h1M980 569.5h1M981 568.5h1M982 569.5h1M983 570.5h1M984 569.5h1M985 568.5h1M986 569.5h1M987 570.5h1M988 569.5h1M989 568.5h1M990 569.5h1M991 570.5h1M992 569.5h1M993 568.5h1M994 569.5h1M995 570.5h1M996 569.5h1M997 568.5h1M998 569.5h1M999 570.5h1M1000 569.5h1M1001 568.5h1M1002 569.5h1M1003 570.5h1M1004 569.5h1M1005 568.5h1M1006 569.5h1M1007 570.5h1M1008 569.5h1M1009 568.5h1M1010 569.5h1M1011 570.5h1M1012 569.5h1M1013 568.5h1M1014 569.5h1M1015 570.5h1M1016 569.5h1M1017 568.5h1M1018 569.5h1M1019 570.5h1M1020 569.5h1M1021 568.5h1M1022 569.5h1" stroke="#ff0000" stroke-width="1" fill="none"/><path d="M1055 570.5h1M1056 569.5h1M1057 568.5h1M1058 569.5h1M1059 570.5h1M1060 569.5h1M1061 568.5h1M1062 569.5h1M1063 570.5h1M1064 569.5h1M1065 568.5h1M1066 569.5h1M1067 570.5h1M1068 569.5h1M1069 568.5h1M1070 569.5h1M1071 570.5h1M1072 569.5h1M1073 568.5h1M1074 569.5h1M1075 570.5h1M1076 569.5h1M1077 568.5h1M1078 569.5h1M1079 570.5h1M1080 569.5h1M1081 568.5h1M1082 569.5h1M1083 570.5h1M1084 569.5h1M1085 568.5h1M1086 569.5h1M1087 570.5h1M1088 569.5h1M1089 568.5h1M1090 569.5h1M1091 570.5h1M1092 569.5h1M1093 568.5h1M1094 569.5h1" stroke="#ff0000" stroke-width="1" fill="none"/><path d="M1071 588.5h1M1072 587.5h1M1073 586.5h1M1074 587.5h1M1075 588.5h1M1076 587.5h1M1077 586.5h1M1078 587.5h1M1079 588.5h1M1080 587.5h1M1081 586.5h1M1082 587.5h1M1083 588.5h1M1084 587.5h1M1085 586.5h1M1086 587.5h1M1087 588.5h1M1088 587.5h1M1089 586.5h1M1090 587.5h1M1091 588.5h1M1092 587.5h1M1093 586.5h1M1094 587.5h1M1095 588.5h1M1096 587.5h1M1097 586.5h1M1098 587.5h1M1099 588.5h1M1100 587.5h1M1101 586.5h1M1102 587.5h1" stroke="#ff0000" stroke-width="1" fill="none"/><path d="M1127 588.5h1M1128 587.5h1M1129 586.5h1M1130 587.5h1M1131 588.5h1M1132 587.5h1M1133 586.5h1M1134 587.5h1M1135 588.5h1M1136 587.5h1M1137 586.5h1M1138 587.5h1M1139 588.5h1M1140 587.5h1M1141 586.5h1M1142 587.5h1M1143 588.5h1M1144 587.5h1M1145 586.5h1M1146 587.5h1M1147 588.5h1M1148 587.5h1M1149 586.5h1M1150 587.5h1M1151 588.5h1M1152 587.5h1M1153 586.5h1M1154 587.5h1M1155 588.5h1M1156 587.5h1M1157 586.5h1M1158 587.5h1M1159 588.5h1M1160 587.5h1M1161 586.5h1M1162 587.5h1M1163 588.5h1M1164 587.5h1M1165 586.5h1M1166 587.5h1" stroke="#ff0000" stroke-width="1" fill="none"/><path d="M975 606.5h1M976 605.5h1M977 604.5h1M978 605.5h1M979 606.5h1M980 605.5h1M981 604.5h1M982 605.5h1M983 606.5h1M984 605.5h1M985 604.5h1M986 605.5h1M987 606.5h1M988 605.5h1M989 604.5h1M990 605.5h1M991 606.5h1M992 605.5h1M993 604.5h1M994 605.5h1M995 606.5h1M996 605.5h1M997 604.5h1M998 605.5h1M999 606.5h1M1000 605.5h1M1001 604.5h1M1002 605.5h1M1003 606.5h1M1004 605.5h1M1005 604.5h1M1006 605.5h1" stroke="#ff0000" stroke-width="1" fill="none"/><path d="M1031 606.5h1M1032 605.5h1M1033 604.5h1M1034 605.5h1M1035 606.5h1M1036 605.5h1M1037 604.5h1M1038 605.5h1M1039 606.5h1M1040 605.5h1M1041 604.5h1M1042 605.5h1M1043 606.5h1M1044 605.5h1M1045 604.5h1M1046 605.5h1M1047 606.5h1M1048 605.5h1M1049 604.5h1M1050 605.5h1M1051 606.5h1M1052 605.5h1M1053 604.5h1M1054 605.5h1M1055 606.5h1M1056 605.5h1M1057 604.5h1M1058 605.5h1M1059 606.5h1M1060 605.5h1M1061 604.5h1M1062 605.5h1M1063 606.5h1M1064 605.5h1M1065 604.5h1M1066 605.5h1M1067 606.5h1M1068 605.5h1M1069 604.5h1M1070 605.5h1" stroke="#ff0000" stroke-width="1" fill="none"/><path d="M975 660.5h1M976 659.5h1M977 658.5h1M978 659.5h1M979 660.5h1M980 659.5h1M981 658.5h1M982 659.5h1M983 660.5h1M984 659.5h1M985 658.5h1M986 659.5h1M987 660.5h1M988 659.5h1M989 658.5h1M990 659.5h1M991 660.5h1M992 659.5h1M993 658.5h1M994 659.5h1M995 660.5h1M996 659.5h1M997 658.5h1M998 659.5h1M999 660.5h1M1000 659.5h1M1001 658.5h1M1002 659.5h1M1003 660.5h1M1004 659.5h1M1005 658.5h1M1006 659.5h1" stroke="#ff0000" stroke-width="1" fill="none"/><path d="M1031 660.5h1M1032 659.5h1M1033 658.5h1M1034 659.5h1M1035 660.5h1M1036 659.5h1M1037 658.5h1M1038 659.5h1M1039 660.5h1M1040 659.5h1M1041 658.5h1M1042 659.5h1M1043 660.5h1M1044 659.5h1M1045 658.5h1M1046 659.5h1M1047 660.5h1M1048 659.5h1M1049 658.5h1M1050 659.5h1M1051 660.5h1M1052 659.5h1M1053 658.5h1M1054 659.5h1M1055 660.5h1M1056 659.5h1M1057 658.5h1M1058 659.5h1M1059 660.5h1M1060 659.5h1M1061 658.5h1M1062 659.5h1M1063 660.5h1M1064 659.5h1M1065 658.5h1M1066 659.5h1M1067 660.5h1M1068 659.5h1M1069 658.5h1M1070 659.5h1" stroke="#ff0000" stroke-width="1" fill="none"/><path d="M1119 660.5h1M1120 659.5h1M1121 658.5h1M1122 659.5h1M1123 660.5h1M1124 659.5h1M1125 658.5h1M1126 659.5h1M1127 660.5h1M1128 659.5h1M1129 658.5h1M1130 659.5h1M1131 660.5h1M1132 659.5h1M1133 658.5h1M1134 659.5h1M1135 660.5h1M1136 659.5h1M1137 658.5h1M1138 659.5h1M1139 660.5h1M1140 659.5h1M1141 658.5h1M1142 659.5h1M1143 660.5h1M1144 659.5h1M1145 658.5h1M1146 659.5h1M1147 660.5h1M1148 659.5h1M1149 658.5h1M1150 659.5h1M1151 660.5h1M1152 659.5h1M1153 658.5h1M1154 659.5h1M1155 660.5h1M1156 659.5h1M1157 658.5h1M1158 659.5h1M1159 660.5h1M1160 659.5h1M1161 658.5h1M1162 659.5h1M1163 660.5h1M1164 659.5h1M1165 658.5h1M1166 659.5h1M1167 660.5h1M1168 659.5h1M1169 658.5h1M1170 659.5h1M1171 660.5h1M1172 659.5h1M1173 658.5h1M1174 659.5h1M1175 660.5h1M1176 659.5h1M1177 658.5h1M1178 659.5h1M1179 660.5h1M1180 659.5h1M1181 658.5h1M1182 659.5h1" stroke="#ff0000" stroke-width="1" fill="none"/><path d="M1191 660.5h1M1192 659.5h1M1193 658.5h1M1194 659.5h1M1195 660.5h1M1196 659.5h1M1197 658.5h1M1198 659.5h1M1199 660.5h1M1200 659.5h1M1201 658.5h1M1202 659.5h1M1203 660.5h1M1204 659.5h1M1205 658.5h1M1206 659.5h1" stroke="#ff0000" stroke-width="1" fill="none"/><path d="M1295 660.5h1M1296 659.5h1M1297 658.5h1M1298 659.5h1M1299 660.5h1M1300 659.5h1M1301 658.5h1M1302 659.5h1M1303 660.5h1M1304 659.5h1M1305 658.5h1M1306 659.5h1M1307 660.5h1M1308 659.5h1M1309 658.5h1M1310 659.5h1M1311 660.5h1M1312 659.5h1M1313 658.5h1M1314 659.5h1M1315 660.5h1M1316 659.5h1M1317 658.5h1M1318 659.5h1M1319 660.5h1M1320 659.5h1M1321 658.5h1M1322 659.5h1M1323 660.5h1M1324 659.5h1M1325 658.5h1M1326 659.5h1M1327 660.5h1M1328 659.5h1M1329 658.5h1M1330 659.5h1M1331 660.5h1M1332 659.5h1M1333 658.5h1M1334 659.5h1M1335 660.5h1M1336 659.5h1M1337 658.5h1M1338 659.5h1M1339 660.5h1M1340 659.5h1M1341 658.5h1M1342 659.5h1M1343 660.5h1M1344 659.5h1M1345 658.5h1M1346 659.5h1M1347 660.5h1M1348 659.5h1M1349 658.5h1M1350 659.5h1M1351 660.5h1M1352 659.5h1M1353 658.5h1M1354 659.5h1M1355 660.5h1M1356 659.5h1M1357 658.5h1M1358 659.5h1M1359 660.5h1M1360 659.5h1M1361 658.5h1M1362 659.5h1M1363 660.5h1M1364 659.5h1M1365 658.5h1M1366 659.5h1" stroke="#ff0000" stroke-width="1" fill="none"/></svg></div></body></html>
